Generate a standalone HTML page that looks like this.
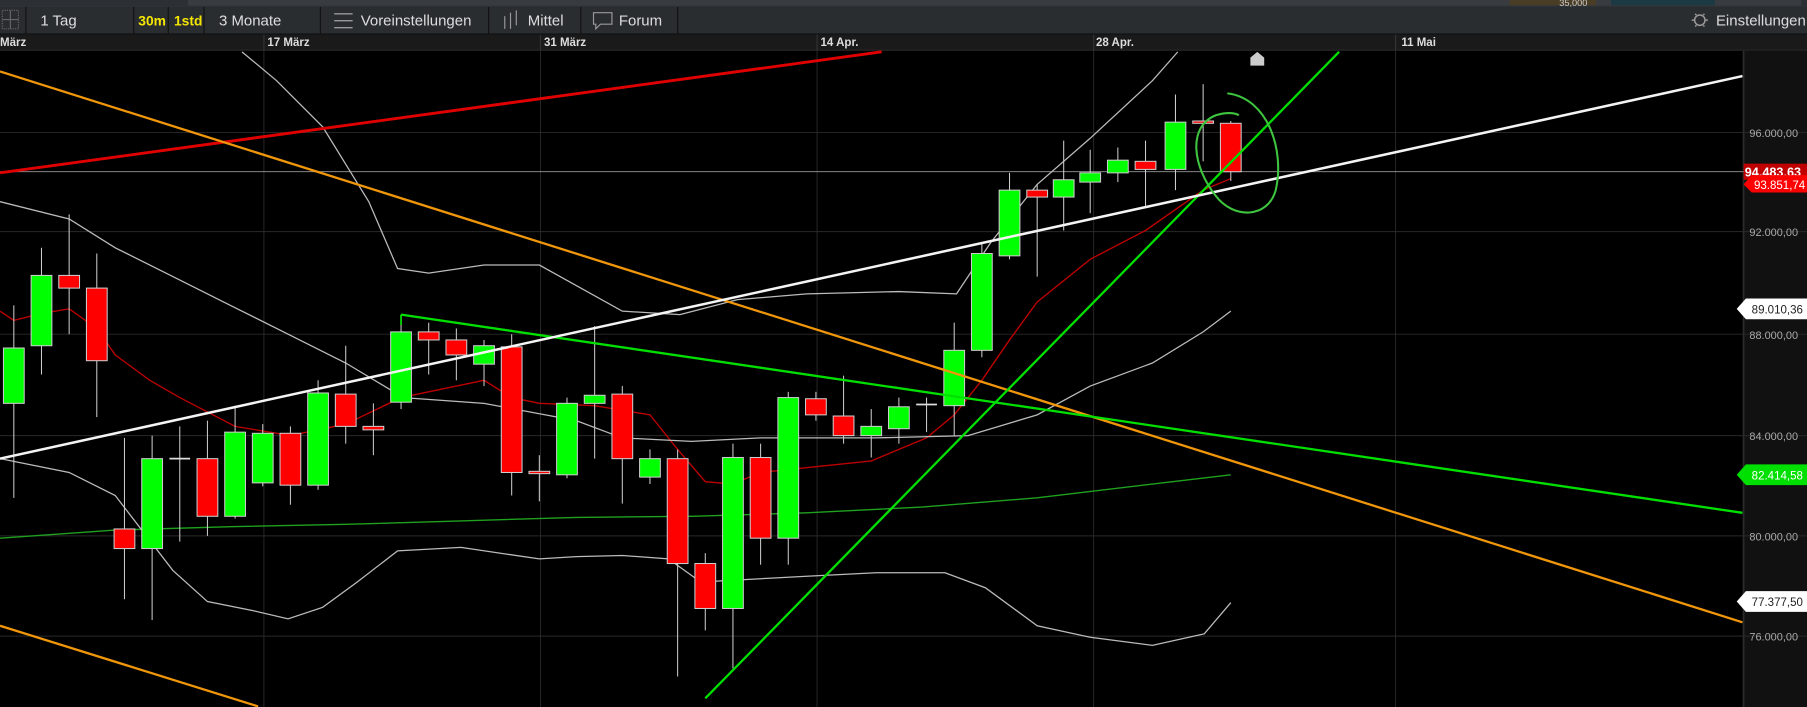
<!DOCTYPE html>
<html><head><meta charset="utf-8"><style>
html,body{margin:0;padding:0;background:#000;overflow:hidden}
svg{display:block}
text{font-family:"Liberation Sans",sans-serif}
</style></head><body>
<svg width="1807" height="707" viewBox="0 0 1568 613.5" preserveAspectRatio="none" xmlns="http://www.w3.org/2000/svg">
<rect x="0" y="0" width="1568" height="6" fill="#3a3e42"/>
<rect x="0" y="0" width="1568" height="5.5" fill="#2c3034"/>
<rect x="163" y="0" width="1400" height="5" fill="#383c40"/>
<rect x="1310" y="0" width="75" height="4.5" fill="#4a3d25"/>
<rect x="1398" y="0" width="90" height="4.5" fill="#1c3a44"/>
<text x="1353" y="5" font-size="8" fill="#ccc">35,000</text>
<rect x="0" y="6" width="1568" height="23.5" fill="#2a2d30"/>
<rect x="0" y="29" width="1568" height="0.8" fill="#111"/>
<g stroke="#111" stroke-width="1">
<line x1="22.5" y1="6" x2="22.5" y2="29"/><line x1="116" y1="6" x2="116" y2="29"/><line x1="146" y1="6" x2="146" y2="29"/><line x1="177" y1="6" x2="177" y2="29"/><line x1="278" y1="6" x2="278" y2="29"/><line x1="424" y1="6" x2="424" y2="29"/><line x1="504" y1="6" x2="504" y2="29"/><line x1="588" y1="6" x2="588" y2="29"/>
</g>
<rect x="2" y="9" width="14" height="16" fill="none" stroke="#666" stroke-dasharray="1,1"/>
<line x1="9" y1="9" x2="9" y2="25" stroke="#666"/><line x1="2" y1="17" x2="16" y2="17" stroke="#666"/>
<text x="35" y="22" font-size="13" fill="#ddd">1 Tag</text>
<text x="120" y="22" font-size="12" font-weight="bold" fill="#f5e600">30m</text>
<text x="151" y="22" font-size="12" font-weight="bold" fill="#f5e600">1std</text>
<text x="190" y="22" font-size="13" fill="#ddd">3 Monate</text>
<g stroke="#999" stroke-width="1.2"><line x1="290" y1="12" x2="306" y2="12"/><line x1="290" y1="18" x2="306" y2="18"/><line x1="290" y1="24" x2="306" y2="24"/></g>
<text x="313" y="22" font-size="13" fill="#ddd">Voreinstellungen</text>
<g stroke="#999" stroke-width="1"><line x1="438" y1="14" x2="438" y2="25"/><line x1="443" y1="11" x2="443" y2="25"/><line x1="448" y1="9" x2="448" y2="22"/></g>
<text x="458" y="22" font-size="13" fill="#ddd">Mittel</text>
<path d="M515 11 h16 v10 h-10 l-4 4 v-4 h-2 z" fill="none" stroke="#999"/>
<text x="537" y="22" font-size="13" fill="#ddd">Forum</text>
<circle cx="1475" cy="17.5" r="4.5" fill="none" stroke="#999" stroke-width="1.3"/>
<g stroke="#999" stroke-width="1.3"><line x1="1468" y1="17.5" x2="1470" y2="17.5"/><line x1="1480" y1="17.5" x2="1482" y2="17.5"/><line x1="1471" y1="12" x2="1472" y2="13"/><line x1="1479" y1="12" x2="1478" y2="13"/><line x1="1471" y1="23" x2="1472" y2="22"/><line x1="1479" y1="23" x2="1478" y2="22"/></g>
<text x="1489" y="22" font-size="13" fill="#ddd">Einstellungen</text>
<rect x="0" y="29.8" width="1568" height="13.5" fill="#1a1a1a"/>
<rect x="0" y="43" width="1568" height="1" fill="#2a2a2a"/>
<g font-size="10" fill="#ddd" font-weight="bold">
<text x="0" y="40">März</text><text x="232" y="40">17 März</text><text x="472" y="40">31 März</text><text x="712" y="40">14 Apr.</text><text x="951" y="40">28 Apr.</text><text x="1216" y="40">11 Mai</text></g>
<g stroke="#333" stroke-width="1">
<line x1="229" y1="30" x2="229" y2="44"/><line x1="469" y1="30" x2="469" y2="44"/><line x1="709" y1="30" x2="709" y2="44"/><line x1="949" y1="30" x2="949" y2="44"/><line x1="1211" y1="30" x2="1211" y2="44"/>
</g>
<rect x="1512" y="44" width="56" height="570" fill="#111"/>
<line x1="1513" y1="44" x2="1513" y2="614" stroke="#2a2a2a" stroke-width="1.5"/>
<g stroke="#2a2a2a" stroke-width="0.8">
<line x1="229" y1="44" x2="229" y2="614"/><line x1="469" y1="44" x2="469" y2="614"/><line x1="709" y1="44" x2="709" y2="614"/><line x1="949" y1="44" x2="949" y2="614"/><line x1="1211" y1="44" x2="1211" y2="614"/>
<line x1="0" y1="115" x2="1568" y2="115"/><line x1="0" y1="201" x2="1568" y2="201"/><line x1="0" y1="290" x2="1568" y2="290"/><line x1="0" y1="378" x2="1568" y2="378"/><line x1="0" y1="465" x2="1568" y2="465"/><line x1="0" y1="552" x2="1568" y2="552"/>
</g>
<g font-size="9.5" fill="#aaa">
<text x="1518" y="119">96.000,00</text><text x="1518" y="205">92.000,00</text><text x="1518" y="294">88.000,00</text><text x="1518" y="382">84.000,00</text><text x="1518" y="469">80.000,00</text><text x="1518" y="556">76.000,00</text></g>
<line x1="0" y1="149" x2="1513" y2="149" stroke="#999" stroke-width="0.8"/>
<path d="M1085 57 v-7 l6 -5 l6 5 v7 z" fill="#ccc"/>
<polyline fill="none" stroke="#1fa01f" stroke-width="1.2" points="0,467 100,460 200,457 300,455 400,452 500,449 600,448 700,445 800,440 900,432 1000,420 1068,412"/>
<polyline fill="none" stroke="#b00" stroke-width="1.2" points="0,270 12,278 36,272 60,268 84,285 100,308 130,330 156,345 204,370 252,378 300,368 348,345 396,335 420,330 444,345 468,350 516,352 564,360 588,390 612,418 636,420 660,410 708,405 756,400 804,380 828,360 852,330 876,295 900,262 946,225 994,200 1044,165 1068,155"/>
<polyline fill="none" stroke="#bbb" stroke-width="1.1" points="210,45 240,70 280,110 320,175 345,233 372,237 420,230 468,230 540,270 590,273 640,260 700,255 780,253 830,255 860,210 900,160 946,120 1000,70 1022,45"/>
<polyline fill="none" stroke="#bbb" stroke-width="1.1" points="0,175 60,190 100,215 150,240 200,265 250,290 300,315 350,345 420,350 500,365 540,380 600,383 660,380 700,380 760,380 840,378 900,360 946,335 1000,315 1044,288 1068,270"/>
<polyline fill="none" stroke="#bbb" stroke-width="1.1" points="0,398 60,410 100,430 150,495 180,522 220,530 250,537 280,527 310,505 345,478 400,475 468,485 500,483 540,482 580,485 608,505 700,500 760,497 820,497 855,510 900,543 946,553 1000,560 1045,550 1068,523"/>
<g stroke="#ccc" stroke-width="0.9">
<g>
<line x1="12" y1="265" x2="12" y2="432"/><line x1="36" y1="215" x2="36" y2="325"/><line x1="60" y1="186" x2="60" y2="290"/><line x1="84" y1="220" x2="84" y2="362"/><line x1="108" y1="380" x2="108" y2="520"/><line x1="132" y1="378" x2="132" y2="538"/><line x1="156" y1="370" x2="156" y2="470"/><line x1="180" y1="365" x2="180" y2="465"/><line x1="204" y1="352" x2="204" y2="450"/><line x1="228" y1="368" x2="228" y2="422"/><line x1="252" y1="370" x2="252" y2="438"/><line x1="276" y1="330" x2="276" y2="425"/><line x1="300" y1="300" x2="300" y2="385"/><line x1="324" y1="350" x2="324" y2="395"/><line x1="348" y1="275" x2="348" y2="355"/><line x1="372" y1="280" x2="372" y2="325"/><line x1="396" y1="285" x2="396" y2="330"/><line x1="420" y1="295" x2="420" y2="335"/><line x1="444" y1="290" x2="444" y2="430"/><line x1="468" y1="395" x2="468" y2="435"/><line x1="492" y1="345" x2="492" y2="415"/><line x1="516" y1="283" x2="516" y2="398"/><line x1="540" y1="335" x2="540" y2="437"/><line x1="564" y1="390" x2="564" y2="420"/><line x1="588" y1="390" x2="588" y2="587"/><line x1="612" y1="480" x2="612" y2="547"/><line x1="636" y1="385" x2="636" y2="580"/><line x1="660" y1="385" x2="660" y2="490"/><line x1="684" y1="340" x2="684" y2="490"/><line x1="708" y1="340" x2="708" y2="365"/><line x1="732" y1="326" x2="732" y2="385"/><line x1="756" y1="355" x2="756" y2="397"/><line x1="780" y1="345" x2="780" y2="385"/><line x1="804" y1="345" x2="804" y2="375"/><line x1="828" y1="280" x2="828" y2="378"/><line x1="852" y1="210" x2="852" y2="310"/><line x1="876" y1="150" x2="876" y2="225"/><line x1="900" y1="160" x2="900" y2="240"/><line x1="923" y1="122" x2="923" y2="200"/><line x1="946" y1="130" x2="946" y2="185"/><line x1="970" y1="128" x2="970" y2="158"/><line x1="994" y1="122" x2="994" y2="180"/><line x1="1020" y1="82" x2="1020" y2="165"/><line x1="1044" y1="73" x2="1044" y2="140"/><line x1="1068" y1="105" x2="1068" y2="157"/>
</g>
<g fill="#00ff00">
<rect x="3" y="302" width="18" height="48"/><rect x="27" y="239" width="18" height="61"/><rect x="123" y="398" width="18" height="78"/><rect x="195" y="375" width="18" height="73"/><rect x="219" y="376" width="18" height="43"/><rect x="267" y="341" width="18" height="80"/><rect x="339" y="288" width="18" height="61"/><rect x="411" y="300" width="18" height="16"/><rect x="483" y="350" width="18" height="62"/><rect x="507" y="343" width="18" height="7"/><rect x="555" y="398" width="18" height="16"/><rect x="627" y="397" width="18" height="131"/><rect x="675" y="345" width="18" height="122"/><rect x="747" y="370" width="18" height="8"/><rect x="771" y="353" width="18" height="19"/><rect x="819" y="304" width="18" height="48"/><rect x="843" y="220" width="18" height="84"/><rect x="867" y="165" width="18" height="57"/><rect x="914" y="156" width="18" height="15"/><rect x="937" y="150" width="18" height="8"/><rect x="961" y="139" width="18" height="11"/><rect x="1011" y="106" width="18" height="41"/>
</g>
<g fill="#ff0000">
<rect x="51" y="239" width="18" height="11"/><rect x="75" y="250" width="18" height="63"/><rect x="99" y="459" width="18" height="17"/><rect x="171" y="398" width="18" height="50"/><rect x="243" y="376" width="18" height="45"/><rect x="291" y="342" width="18" height="28"/><rect x="315" y="370" width="18" height="3"/><rect x="363" y="288" width="18" height="7"/><rect x="387" y="295" width="18" height="13"/><rect x="435" y="301" width="18" height="109"/><rect x="459" y="409" width="18" height="2"/><rect x="531" y="342" width="18" height="56"/><rect x="579" y="398" width="18" height="91"/><rect x="603" y="489" width="18" height="39"/><rect x="651" y="397" width="18" height="70"/><rect x="699" y="346" width="18" height="14"/><rect x="723" y="361" width="18" height="17"/><rect x="891" y="165" width="18" height="6"/><rect x="985" y="140" width="18" height="7"/><rect x="1035" y="105" width="18" height="2"/><rect x="1059" y="107" width="18" height="42"/>
</g>
<line x1="147" y1="398" x2="165" y2="398" stroke="#ddd" stroke-width="1.5"/>
<line x1="795" y1="351" x2="813" y2="351" stroke="#ddd" stroke-width="1.5"/>
</g>
<line x1="0" y1="150" x2="765" y2="45" stroke="#e00000" stroke-width="2.5"/>
<line x1="0" y1="62" x2="1512" y2="540" stroke="#f0960a" stroke-width="2"/>
<line x1="0" y1="543" x2="224" y2="613" stroke="#f0960a" stroke-width="2"/>
<line x1="348" y1="273" x2="1512" y2="445" stroke="#00e000" stroke-width="2"/>
<line x1="348" y1="273" x2="348" y2="282" stroke="#00e000" stroke-width="1.5"/>
<line x1="612" y1="606" x2="1162" y2="45" stroke="#00e000" stroke-width="2"/>
<line x1="0" y1="398" x2="1512" y2="66" stroke="#f4f4f4" stroke-width="2.2"/>
<path d="M1065 81 C1100 85 1115 130 1107 165 C1100 190 1070 190 1055 170 C1035 145 1030 110 1055 100 C1065 97 1072 98 1075 100" fill="none" stroke="#3ec43e" stroke-width="1.8"/>
<rect x="1513" y="142" width="55" height="14" fill="#c00000"/>
<text x="1514" y="153" font-size="11" font-weight="bold" fill="#fff">94.483,63</text>
<path d="M1513 160 l7 -8 h48 v15 h-48 z" fill="#ff0000"/>
<text x="1522" y="164" font-size="10" fill="#fff">93.851,74</text>
<path d="M1507 268 l8 -9 h53 v18 h-53 z" fill="#fff"/>
<text x="1520" y="272" font-size="10" fill="#222">89.010,36</text>
<path d="M1507 412 l8 -9 h53 v18 h-53 z" fill="#00e000"/>
<text x="1520" y="416" font-size="10" fill="#fff">82.414,58</text>
<path d="M1507 522 l8 -9 h53 v18 h-53 z" fill="#fff"/>
<text x="1520" y="526" font-size="10" fill="#222">77.377,50</text>
</svg>
</body></html>
